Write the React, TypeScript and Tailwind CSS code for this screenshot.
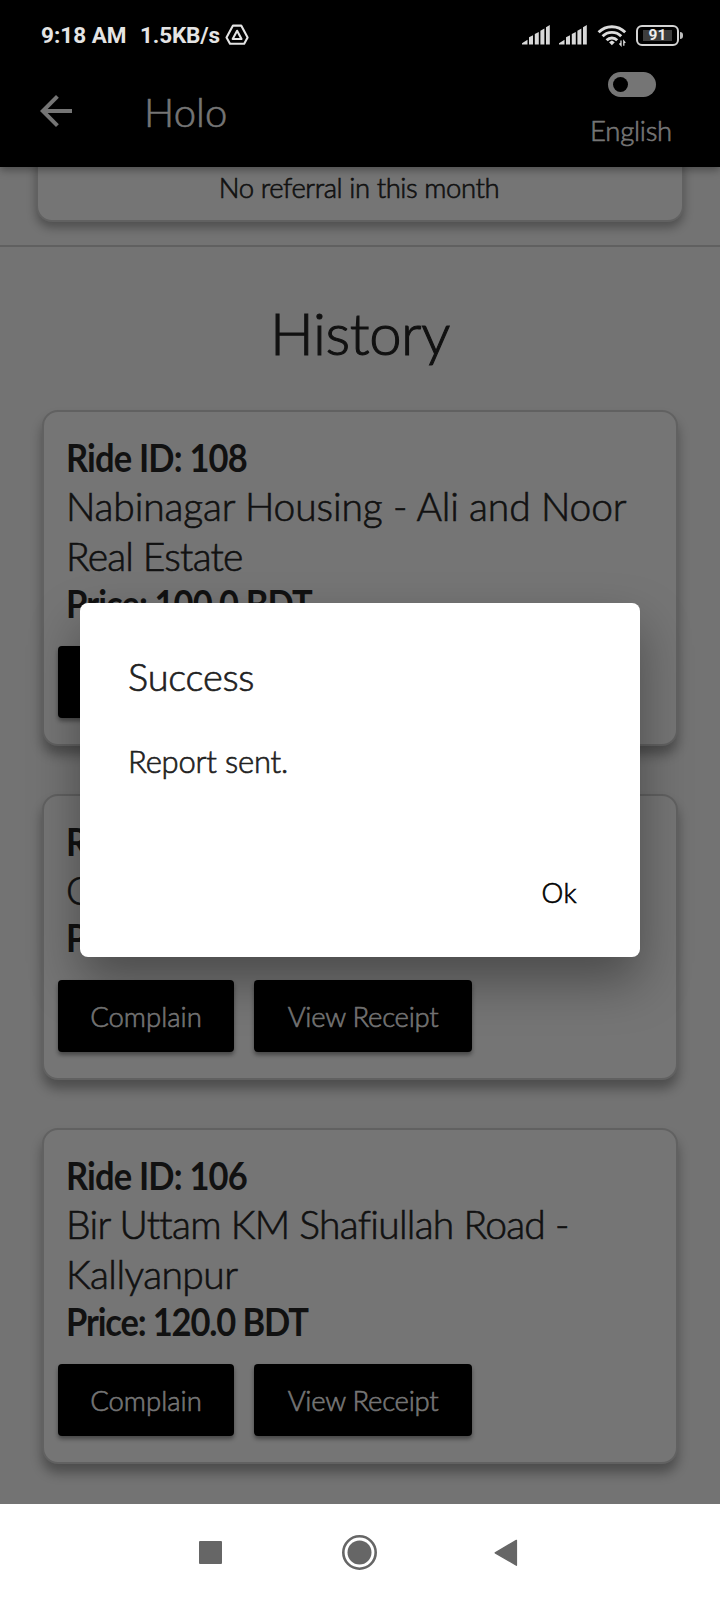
import React from "react";

const light = "font-light [-webkit-text-stroke:0.65px]";

function Signal() {
  return (
    <svg className="h-5 w-7" viewBox="0 0 28 20" fill="#d8d8d8">
      <path d="M0 19.5v-1.2l5.5-3.5v4.7zM7 19.5v-7.3l4-2v9.3zM12.8 19.5V9l4-2v12.5zM18.4 19.5V5.8l4-2.2v15.9zM24 19.5V2.2L27.8 0v19.5z" />
    </svg>
  );
}

function Drive() {
  return (
    <svg className="h-[22px] w-6" viewBox="0 0 24 22" fill="none" stroke="#e4e4e4" strokeWidth="2.1" strokeLinejoin="round">
      <path d="M8 1.6h8.2l6.4 11.8-3.4 6.4H5L1.5 13.4z" />
      <path d="M12.1 6.8l4.4 8.2H7.7z" />
    </svg>
  );
}

function Wifi() {
  return (
    <svg className="h-[23px] w-[30px]" viewBox="0 0 30 23" fill="none" stroke="#dcdcdc" strokeWidth="2.9">
      <path d="M1.6 8.3a18.6 18.6 0 0 1 26.6 0M5.6 12.3a13 13 0 0 1 18.6 0M9.6 16.2a7.4 7.4 0 0 1 10.6 0" />
      <path d="M14.9 16.4l2.9 1.8-2.9 3-2.9-3z" fill="#dcdcdc" stroke="none" />
      <path d="M24 16.5v4.8l-1.6-1.8M26.8 21.8V17l1.5 1.8" strokeWidth="1.3" />
    </svg>
  );
}

function Battery() {
  return (
    <div className="flex items-center gap-px">
      <div className="flex h-[21px] w-[43px] items-center justify-center rounded-[6px] border-[2.5px] border-[#d4d4d4]">
        <div className="flex h-[11px] w-[29px] items-center justify-center bg-[#3c3c3c] font-[Roboto] text-[15.5px] leading-[11px] font-bold text-[#eee]">91</div>
      </div>
      <div className="h-[7px] w-[3px] rounded-r-sm bg-[#bdbdbd]" />
    </div>
  );
}

function Action({ children, className }: { children: React.ReactNode; className: string }) {
  return (
    <button className={`flex h-[72px] items-center justify-center rounded-[4px] bg-black pt-px text-[27.5px] text-[#757575] shadow-[0_3px_4px_rgba(0,0,0,0.4)] ${light} ${className}`}>
      {children}
    </button>
  );
}

function Ride({ id, route, price, priceSpacing }: { id: string; route: [string, string][]; price: string; priceSpacing: string }) {
  return (
    <section className="rounded-[16px] border-2 border-[#616161] bg-[#757575] pt-[22px] pb-[26px] shadow-[0_9px_12px_rgba(0,0,0,0.33)]">
      <div className="pl-[22px] whitespace-nowrap">
        <h3 className="origin-left scale-x-[0.92] text-[37.5px] leading-[47px] font-bold tracking-[-0.9px]">Ride ID: {id}</h3>
        {route.map(([line, spacing]) => (
          <p key={line} className={`text-[39px] leading-[50px] ${light} ${spacing}`}>{line}</p>
        ))}
        <p className={`origin-left scale-x-[0.92] text-[37.5px] leading-[46px] font-bold ${priceSpacing}`}>Price: {price}</p>
      </div>
      <div className="mt-[19px] flex gap-5 pl-3.5">
        <Action className="w-44">Complain</Action>
        <Action className="w-[218px] tracking-[-0.28px]">View Receipt</Action>
      </div>
    </section>
  );
}

export default function App() {
  return (
    <div className="relative flex h-[1600px] w-[720px] flex-col overflow-hidden bg-[#737373] font-[Lato,sans-serif] text-[#111]">
      <header className="relative z-10 h-[167px] shrink-0 bg-black text-[#757575] shadow-[0_3px_8px_rgba(0,0,0,0.35)]">
        <div className="flex h-[70px] items-center pl-[41px] font-[Roboto] text-[22.5px] font-bold text-[#e4e4e4]">
          <span className="w-[99px] pt-px whitespace-nowrap">9:18 AM</span>
          <span className="w-[85px] pt-px tracking-[-0.15px]">1.5KB/s</span>
          <Drive />
          <div className="ml-auto flex items-center pr-[37px]">
            <Signal />
            <div className="w-[9px]" />
            <Signal />
            <div className="w-[10px]" />
            <Wifi />
            <div className="w-[9px]" />
            <Battery />
          </div>
        </div>
        <div className="flex">
          <svg className="mt-[17px] ml-8 h-12 w-12" viewBox="0 0 24 24" fill="#757575">
            <path d="M20 11H7.83l5.59-5.59L12 4l-8 8 8 8 1.41-1.41L7.83 13H20z" />
          </svg>
          <h1 className={`mt-[17px] ml-16 text-[40px] leading-[50px] tracking-[0.1px] ${light}`}>Holo</h1>
          <div className="mt-[1.5px] ml-auto mr-[48px] flex w-20 flex-col items-center">
            <div className="flex h-[25px] w-12 items-center rounded-full bg-[#757575] pl-[5px]">
              <div className="h-[15px] w-[15px] rounded-full bg-black" />
            </div>
            <span className={`mt-3.5 -ml-0.5 text-[27.5px] leading-10 tracking-[-0.25px] ${light}`}>English</span>
          </div>
        </div>
      </header>

      <main className="flex h-[1337px] shrink-0 flex-col overflow-hidden">
        <div className="mx-9 -mt-5 h-[75px] shrink-0 rounded-[16px] border-2 border-[#616161] bg-[#757575] pt-[19px] text-center shadow-[0_6px_10px_rgba(0,0,0,0.3)]">
          <p className={`-ml-0.5 text-[27.5px] leading-10 tracking-[-0.43px] ${light}`}>No referral in this month</p>
        </div>
        <div className="mt-[23px] h-0.5 shrink-0 bg-[#606060]" />
        <h2 className="mt-[51px] text-center text-[58px] leading-[70px] font-light tracking-[-0.4px] [-webkit-text-stroke:1.1px]">History</h2>
        <div className="mx-[42px] mt-[42px] flex flex-col gap-12">
          <Ride id="108" price="100.0 BDT" priceSpacing="tracking-[-0.98px]" route={[["Nabinagar Housing - Ali and Noor", "tracking-[-0.15px]"], ["Real Estate", "tracking-[-0.8px]"]]} />
          <Ride id="107" price="100.0 BDT" priceSpacing="tracking-[-0.98px]" route={[["O", ""]]} />
          <Ride id="106" price="120.0 BDT" priceSpacing="tracking-[-1.25px]" route={[["Bir Uttam KM Shafiullah Road -", "tracking-[-0.72px]"], ["Kallyanpur", "tracking-[-0.55px]"]]} />
        </div>
      </main>

      <nav className="relative z-10 h-24 shrink-0 bg-white">
        <svg className="h-24 w-[720px]" viewBox="0 0 720 96" fill="#666">
          <rect x="199" y="37" width="23" height="23" rx="1" />
          <circle cx="359.5" cy="48.5" r="16.2" fill="none" stroke="#666" strokeWidth="2.6" />
          <circle cx="359.5" cy="48.5" r="12" />
          <path d="M495.2 48.8L516.4 36.4V61.2z" stroke="#666" strokeWidth="1.4" strokeLinejoin="round" />
        </svg>
      </nav>

      <div role="dialog" className="absolute top-[602.5px] left-20 z-20 flex h-[354px] w-[560px] flex-col rounded-[8px] bg-white px-12 text-[#212121] shadow-[0_24px_50px_rgba(0,0,0,0.36)]">
        <h2 className={`mt-[48.5px] text-[38px] leading-[50px] tracking-[-0.25px] ${light}`}>Success</h2>
        <p className={`mt-10 text-[31px] leading-10 tracking-[-0.2px] ${light}`}>Report sent.</p>
        <button className={`mt-[92px] mr-[15px] self-end text-[27.5px] leading-10 tracking-[0.5px] text-black ${light}`}>Ok</button>
      </div>
    </div>
  );
}
